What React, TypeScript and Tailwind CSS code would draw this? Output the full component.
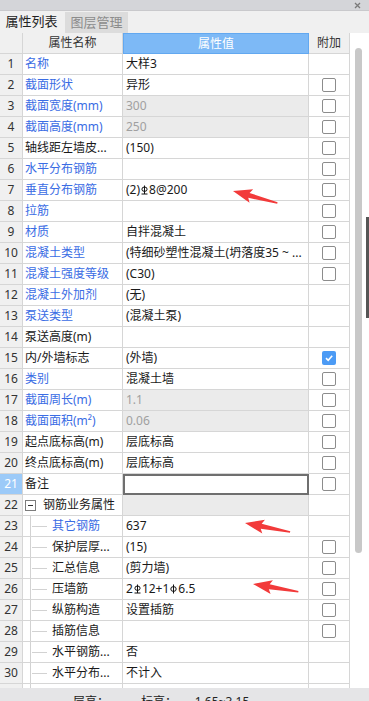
import React from "react";

type Row = {
  name: string;
  value?: React.ReactNode;
  blue?: boolean;
  gray?: boolean;
  cb?: number;
  child?: boolean;
  group?: boolean;
  edit?: boolean;
};

const Gr3 = () => (
  <svg width="7" height="10" viewBox="0 0 7 10" className="inline-block align-[4px] mx-[1px]">
    <path d="M3.5 0.5V9M0.5 9H6.5" stroke="#111" strokeWidth="1" fill="none" />
    <ellipse cx="3.5" cy="4.2" rx="2.6" ry="2.2" stroke="#111" strokeWidth="1" fill="none" />
  </svg>
);

const Gr1 = () => (
  <svg width="7" height="10" viewBox="0 0 7 10" className="inline-block align-[3px] mx-[1px]">
    <path d="M3.5 0.5V9.5" stroke="#111" strokeWidth="1" fill="none" />
    <ellipse cx="3.5" cy="5" rx="2.7" ry="2.4" stroke="#111" strokeWidth="1" fill="none" />
  </svg>
);

const rows: Row[] = [
  { name: "名称", value: "大样3", blue: true },
  { name: "截面形状", value: "异形", blue: true, cb: 1 },
  { name: "截面宽度(mm)", value: "300", blue: true, gray: true, cb: 1 },
  { name: "截面高度(mm)", value: "250", blue: true, gray: true, cb: 1 },
  { name: "轴线距左墙皮...", value: "(150)", cb: 1 },
  { name: "水平分布钢筋", blue: true, cb: 1 },
  { name: "垂直分布钢筋", value: <>(2)<Gr3 />8@200</>, blue: true, cb: 1 },
  { name: "拉筋", blue: true, cb: 1 },
  { name: "材质", value: "自拌混凝土", blue: true, cb: 1 },
  { name: "混凝土类型", value: "(特细砂塑性混凝土(坍落度35 ~ ...", blue: true, cb: 1 },
  { name: "混凝土强度等级", value: "(C30)", blue: true, cb: 1 },
  { name: "混凝土外加剂", value: "(无)", blue: true },
  { name: "泵送类型", value: "(混凝土泵)", blue: true },
  { name: "泵送高度(m)" },
  { name: "内/外墙标志", value: "(外墙)", cb: 2 },
  { name: "类别", value: "混凝土墙", blue: true, cb: 1 },
  { name: "截面周长(m)", value: "1.1", blue: true, gray: true, cb: 1 },
  { name: "截面面积(m²)", value: "0.06", blue: true, gray: true, cb: 1 },
  { name: "起点底标高(m)", value: "层底标高", cb: 1 },
  { name: "终点底标高(m)", value: "层底标高", cb: 1 },
  { name: "备注", cb: 1, edit: true },
  { name: "钢筋业务属性", group: true, gray: true },
  { name: "其它钢筋", value: "637", blue: true, child: true },
  { name: "保护层厚...", value: "(15)", child: true, cb: 1 },
  { name: "汇总信息", value: "(剪力墙)", child: true, cb: 1 },
  { name: "压墙筋", value: <>2<Gr3 />12+1<Gr1 />6.5</>, child: true, cb: 1 },
  { name: "纵筋构造", value: "设置插筋", child: true, cb: 1 },
  { name: "插筋信息", child: true, cb: 1 },
  { name: "水平钢筋...", value: "否", child: true },
  { name: "水平分布...", value: "不计入", child: true },
  { name: "", child: true },
];

const Check = ({ on }: { on?: boolean }) =>
  on ? (
    <div className="w-[14px] h-[14px] rounded-[2px] bg-[#4c9bf5] flex items-center justify-center">
      <svg width="10" height="10" viewBox="0 0 10 10">
        <path d="M2 5.2L4.2 7.3L8.2 2.8" stroke="#fff" strokeWidth="1.6" fill="none" />
      </svg>
    </div>
  ) : (
    <div className="w-[14px] h-[14px] rounded-[2px] border border-[#8c8c8c] bg-white" />
  );

const Arrow = ({ x, y, a }: { x: number; y: number; a: number }) => (
  <polygon
    transform={`translate(${x} ${y}) rotate(${a})`}
    points="0,0 19,-7 16.5,-2.4 46,-0.6 46,0.9 16.5,2.6 19,7"
    fill="#f23a3a"
  />
);

export default function App() {
  return (
    <div className='relative w-[369px] h-[701px] overflow-hidden bg-white text-[12px] text-[#1a1a1a] font-["Noto_Sans","Noto_Sans_CJK_SC",sans-serif]'>
      <div className="h-[10px] bg-[#d4d5d9] flex justify-end items-center pr-[8px]">
        <svg width="7" height="7" viewBox="0 0 7 7">
          <path d="M1 1L6 6M6 1L1 6" stroke="#7a7a7a" strokeWidth="1.3" />
        </svg>
      </div>
      <div className="h-[23px] bg-[#f0f0f0] flex items-end border-t border-[#c9c9cc]">
        <div className="w-[63px] h-full flex items-center justify-center text-[13px] text-[#222] bg-[#f0f0f0]">
          属性列表
        </div>
        <div className="ml-[2px] w-[63px] h-[21px] flex items-center justify-center text-[13px] text-[#8c8c8c] bg-[#dcdcdc]">
          图层管理
        </div>
      </div>
      <div className="flex h-[655px] overflow-hidden">
        <div className="w-[350px] flex flex-col">
          <div className="grid grid-cols-[23px_100px_186px_41px] h-[21px] shrink-0 bg-[#f0f0f0]">
            <div className="border-r border-b border-[#d6d6d6]" />
            <div className="border-r border-b border-[#d6d6d6] flex items-center justify-center text-[#333]">属性名称</div>
            <div className="border border-[#62a8f0] bg-[#7db9f6] flex items-center justify-center text-white">属性值</div>
            <div className="border-r border-b border-[#d6d6d6] flex items-center justify-center text-[#333]">附加</div>
          </div>
          {rows.map((r, i) => (
            <div key={i} className="grid grid-cols-[23px_100px_186px_41px] h-[21px] shrink-0">
              <div
                className={
                  r.edit
                    ? "border-r border-b border-[#d6d6d6] bg-[#9ccaf8] text-white flex items-center justify-center"
                    : "border-r border-b border-[#d6d6d6] bg-[#f0f0f0] text-[#333] flex items-center justify-center"
                }
              >
                {i < 30 ? i + 1 : ""}
              </div>
              <div className={r.blue ? "border-r border-b border-[#d6d6d6] flex items-center text-[#3a6ce4] whitespace-nowrap overflow-hidden" : "border-r border-b border-[#d6d6d6] flex items-center whitespace-nowrap overflow-hidden"}>
                {r.group ? (
                  <>
                    <div className="ml-[2px] w-[11px] h-[11px] border border-[#7c7c7c] bg-white flex items-center justify-center">
                      <div className="w-[5px] h-px bg-[#333]" />
                    </div>
                    <span className="ml-[7px]">{r.name}</span>
                  </>
                ) : r.child ? (
                  <>
                    <div className="ml-[7px] w-[22px] self-stretch flex items-center border-l border-[#d2d2d2]">
                      <div className="ml-[1px] w-[15px] h-px bg-[#d2d2d2]" />
                    </div>
                    <span>{r.name}</span>
                  </>
                ) : (
                  <span className="pl-[2px]">{r.name}</span>
                )}
              </div>
              <div
                className={
                  r.edit
                    ? "border-2 border-[#6f6f6f] bg-white"
                    : r.gray
                    ? "border-r border-b border-[#d6d6d6] bg-[#ebebeb] text-[#a0a0a0] flex items-center pl-[3px] whitespace-nowrap overflow-hidden"
                    : "border-r border-b border-[#d6d6d6] flex items-center pl-[3px] whitespace-nowrap overflow-hidden"
                }
              >
                {r.value}
              </div>
              <div className="border-r border-b border-[#d6d6d6] flex items-center justify-center">
                {r.cb ? <Check on={r.cb === 2} /> : null}
              </div>
            </div>
          ))}
        </div>
        <div className="w-[16px] flex justify-center pt-[15px]">
          <div className="w-[7px] h-[505px] rounded-full bg-[#c8c8c8]" />
        </div>
      </div>
      <div className="h-[13px] bg-[#e5e5e7] overflow-hidden">
        <div className="flex gap-[14px] pl-[73px] pt-[7px] text-[12px] leading-[14px] text-[#222]">
          <span>层高：</span>
          <span>-</span>
          <span>标高：</span>
          <span>-1.65~3.15</span>
        </div>
      </div>
      <div className="absolute right-0 top-[217px] w-[3px] h-[101px] bg-[#555]" />
      <svg className="absolute left-0 top-0 pointer-events-none" width="369" height="701">
        <Arrow x={233} y={191} a={15} />
        <Arrow x={245} y={523} a={11} />
        <Arrow x={253} y={584} a={9.5} />
      </svg>
    </div>
  );
}
